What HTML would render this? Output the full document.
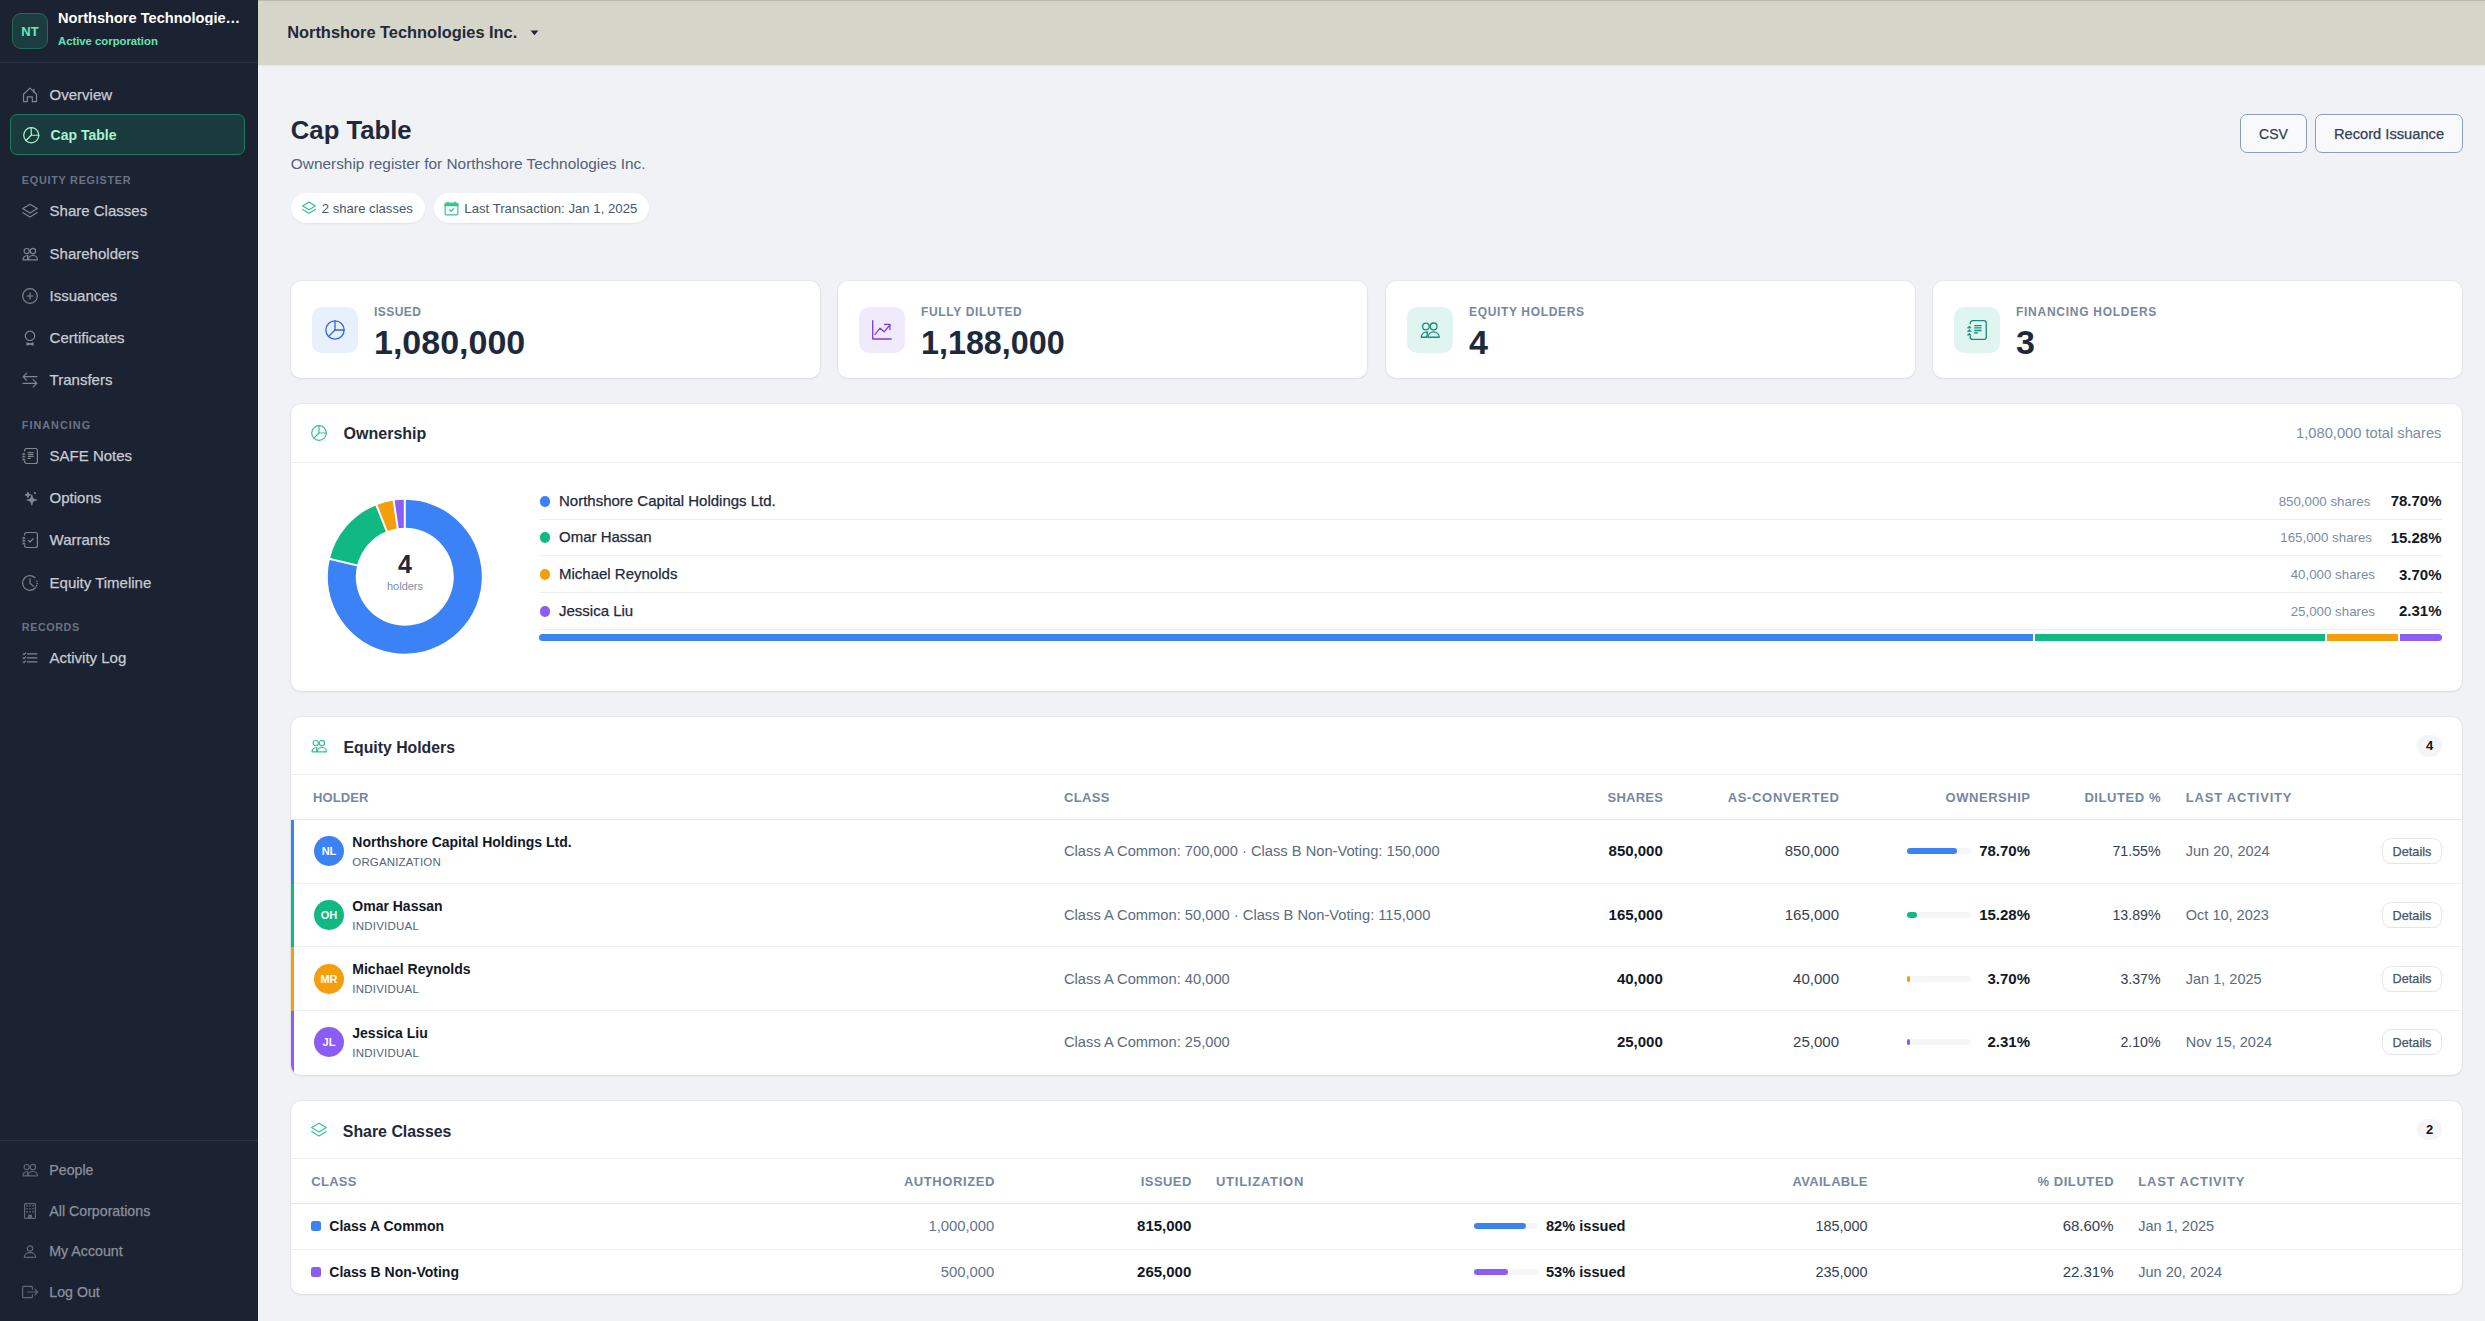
<!DOCTYPE html><html><head><meta charset="utf-8"><style>
html,body{margin:0;padding:0;}
body{width:2485px;height:1321px;overflow:hidden;position:relative;background:#f0f2f5;font-family:"Liberation Sans", sans-serif;}
.t{position:absolute;white-space:nowrap;}
.b{position:absolute;box-sizing:border-box;}
</style></head><body>
<div class="b" style="left:0px;top:0px;width:258px;height:1321px;background:#1b2232;"></div>
<div class="b" style="left:12px;top:13px;width:36px;height:36px;background:#1b3d3f;border:1px solid #1f6e5d;border-radius:9px;"></div>
<div class="t " style="top:25.00px;font-size:13px;line-height:13px;color:#6ee7b7;font-weight:700;left:12.00px;width:36px;text-align:center;">NT</div>
<div class="t " style="top:10.70px;font-size:14.6px;line-height:14.6px;color:#ffffff;font-weight:700;left:58px;width:186px;overflow:hidden;text-overflow:ellipsis;">Northshore Technologies Inc.</div>
<div class="t " style="top:36.35px;font-size:11.3px;line-height:11.3px;color:#66e4b0;font-weight:700;left:58px;">Active corporation</div>
<div class="b" style="left:0px;top:62px;width:258px;height:1px;background:#2a3344;"></div>
<svg class="b" style="left:21.80px;top:86.90px;color:#80878f;overflow:visible" width="16" height="16" viewBox="0 0 16 16" fill="none" stroke="#80878f" stroke-width="1.200" stroke-linecap="round" stroke-linejoin="round"><path d="M5.3 14.6H1.5V7.2L8 1.1l6.5 6.1v7.4h-4.2V9.9H5.3z"/><path d="M11.9 2.3v2.9"/></svg>
<div class="t " style="top:87.00px;font-size:15px;line-height:15px;color:#c8cbd2;left:49.6px;-webkit-text-stroke:0.25px currentColor;">Overview</div>
<div class="b" style="left:10px;top:114px;width:235px;height:41px;background:#1a3b3d;border:1px solid #1f7a60;border-radius:7px;"></div>
<svg class="b" style="left:22.75px;top:126.55px;color:#a7f3d0;overflow:visible" width="16.5" height="16.5" viewBox="0 0 16 16" fill="none" stroke="#a7f3d0" stroke-width="1.212" stroke-linecap="round" stroke-linejoin="round"><circle cx="8" cy="8" r="7.3"/><path d="M8 .7V8h7.3"/><path d="M8 8 2.9 13.1"/></svg>
<div class="t " style="top:128.00px;font-size:14px;line-height:14px;color:#a7f3d0;font-weight:700;left:50.6px;">Cap Table</div>
<div class="t " style="top:174.60px;font-size:10.8px;line-height:10.8px;color:#6b7383;font-weight:700;letter-spacing:0.759px;left:21.8px;">EQUITY REGISTER</div>
<svg class="b" style="left:22.00px;top:203.00px;color:#80878f;overflow:visible" width="16" height="16" viewBox="0 0 16 16" fill="none" stroke="#80878f" stroke-width="1.200" stroke-linecap="round" stroke-linejoin="round"><path d="M8 1.3.7 5.6 8 9.9l7.3-4.3z"/><path d="M.7 9.6 8 13.9l7.3-4.3"/></svg>
<div class="t " style="top:203.00px;font-size:15px;line-height:15px;color:#c8cbd2;left:49.6px;-webkit-text-stroke:0.25px currentColor;">Share Classes</div>
<svg class="b" style="left:22.00px;top:246.00px;color:#80878f;overflow:visible" width="16" height="16" viewBox="0 0 16 16" fill="none" stroke="#80878f" stroke-width="1.200" stroke-linecap="round" stroke-linejoin="round"><circle cx="4.7" cy="5.1" r="2.6"/><circle cx="10.9" cy="5.1" r="2.7"/><path d="M6.4 13.8c0-2.5 2-4.3 4.5-4.3s4.5 1.8 4.5 4.3z"/><path d="M5.9 9.5C3.1 9.6 1 11.3 1 13.8h4.5z"/></svg>
<div class="t " style="top:246.00px;font-size:15px;line-height:15px;color:#c8cbd2;left:49.6px;-webkit-text-stroke:0.25px currentColor;">Shareholders</div>
<svg class="b" style="left:22.00px;top:288.00px;color:#80878f;overflow:visible" width="16" height="16" viewBox="0 0 16 16" fill="none" stroke="#80878f" stroke-width="1.200" stroke-linecap="round" stroke-linejoin="round"><circle cx="8" cy="8" r="7.3"/><path d="M8 4.9v6.2M4.9 8h6.2"/></svg>
<div class="t " style="top:288.00px;font-size:15px;line-height:15px;color:#c8cbd2;left:49.6px;-webkit-text-stroke:0.25px currentColor;">Issuances</div>
<svg class="b" style="left:22.00px;top:330.00px;color:#80878f;overflow:visible" width="16" height="16" viewBox="0 0 16 16" fill="none" stroke="#80878f" stroke-width="1.200" stroke-linecap="round" stroke-linejoin="round"><circle cx="8" cy="5.8" r="4.7"/><path d="M4.4 12.2 8 13.3l3.6-1.1v3.6L8 14.7l-3.6 1.1z" fill="currentColor" stroke="none"/></svg>
<div class="t " style="top:330.00px;font-size:15px;line-height:15px;color:#c8cbd2;left:49.6px;-webkit-text-stroke:0.25px currentColor;">Certificates</div>
<svg class="b" style="left:22.00px;top:372.00px;color:#80878f;overflow:visible" width="16" height="16" viewBox="0 0 16 16" fill="none" stroke="#80878f" stroke-width="1.200" stroke-linecap="round" stroke-linejoin="round"><path d="M15 4.7H1.2M4.7 1.1 1.1 4.7l3.6 3.6"/><path d="M1 11.3h13.8m-3.6-3.6 3.6 3.6-3.6 3.6"/></svg>
<div class="t " style="top:372.00px;font-size:15px;line-height:15px;color:#c8cbd2;left:49.6px;-webkit-text-stroke:0.25px currentColor;">Transfers</div>
<div class="t " style="top:419.60px;font-size:10.8px;line-height:10.8px;color:#6b7383;font-weight:700;letter-spacing:1.034px;left:21.8px;">FINANCING</div>
<svg class="b" style="left:22.00px;top:448.00px;color:#80878f;overflow:visible" width="16" height="16" viewBox="0 0 16 16" fill="none" stroke="#80878f" stroke-width="1.200" stroke-linecap="round" stroke-linejoin="round"><path d="M2.6 3V2.5a2 2 0 0 1 2-2h8.8a2 2 0 0 1 2 2v11a2 2 0 0 1-2 2H4.6a2 2 0 0 1-2-2V13"/><path d="M.5 6.2 1.8 4.8l1.3 1.4zM.5 9 1.8 7.6 3.1 9zM.5 11.9l1.3-1.4 1.3 1.4z" fill="currentColor" stroke-width=".6"/><path d="M6.2 4.5h5M6.2 6.3h5M6.2 8.4h5M6.2 10.4h2"/></svg>
<div class="t " style="top:448.00px;font-size:15px;line-height:15px;color:#c8cbd2;left:49.6px;-webkit-text-stroke:0.25px currentColor;">SAFE Notes</div>
<svg class="b" style="left:22.00px;top:490.00px;color:#80878f;overflow:visible" width="16" height="16" viewBox="0 0 16 16" fill="none" stroke="#80878f" stroke-width="1.200" stroke-linecap="round" stroke-linejoin="round"><path d="M9.8 5.2Q10.1 9.7 14.6 10 10.1 10.3 9.8 14.8 9.5 10.3 5 10 9.5 9.7 9.8 5.2z" fill="currentColor"/><path d="M5.9 2.3Q6.1 4.6 8.4 4.8 6.1 5 5.9 7.3 5.7 5 3.4 4.8 5.7 4.6 5.9 2.3z" fill="currentColor"/><circle cx="12.9" cy="3" r="1.1" fill="currentColor" stroke="none"/></svg>
<div class="t " style="top:490.00px;font-size:15px;line-height:15px;color:#c8cbd2;left:49.6px;-webkit-text-stroke:0.25px currentColor;">Options</div>
<svg class="b" style="left:22.00px;top:532.00px;color:#80878f;overflow:visible" width="16" height="16" viewBox="0 0 16 16" fill="none" stroke="#80878f" stroke-width="1.200" stroke-linecap="round" stroke-linejoin="round"><path d="M2.6 3V2.5a2 2 0 0 1 2-2h8.8a2 2 0 0 1 2 2v11a2 2 0 0 1-2 2H4.6a2 2 0 0 1-2-2V13"/><path d="M.5 6.2 1.8 4.8l1.3 1.4zM.5 9 1.8 7.6 3.1 9zM.5 11.9l1.3-1.4 1.3 1.4z" fill="currentColor" stroke-width=".6"/><path d="M6.3 8.4l1.7 1.6 3.2-3.4"/></svg>
<div class="t " style="top:532.00px;font-size:15px;line-height:15px;color:#c8cbd2;left:49.6px;-webkit-text-stroke:0.25px currentColor;">Warrants</div>
<svg class="b" style="left:22.00px;top:574.70px;color:#80878f;overflow:visible" width="16" height="16" viewBox="0 0 16 16" fill="none" stroke="#80878f" stroke-width="1.200" stroke-linecap="round" stroke-linejoin="round"><path d="M12.9 2.7A7.3 7.3 0 1 0 13.2 13" /><path d="M14.9 6.3v.01M15.2 8.4v.01M14.6 10.6v.01M13.9 12.1v.01" stroke-width="1.5"/><path d="M8 3.8v4.3l3.1 2.9"/></svg>
<div class="t " style="top:575.00px;font-size:15px;line-height:15px;color:#c8cbd2;left:49.6px;-webkit-text-stroke:0.25px currentColor;">Equity Timeline</div>
<div class="t " style="top:621.60px;font-size:10.8px;line-height:10.8px;color:#6b7383;font-weight:700;letter-spacing:0.556px;left:21.8px;">RECORDS</div>
<svg class="b" style="left:22.00px;top:649.70px;color:#80878f;overflow:visible" width="16" height="16" viewBox="0 0 16 16" fill="none" stroke="#80878f" stroke-width="1.200" stroke-linecap="round" stroke-linejoin="round"><path d="M5.3 3.8h9.7M5.3 7.8h9.7M5.3 11.8h9.7"/><path d="M1.2 3.9l.8.7L3.6 2.9M1.2 7.9l.8.7 1.6-1.7M1.2 11.9l.8.7 1.6-1.7"/></svg>
<div class="t " style="top:650.00px;font-size:15px;line-height:15px;color:#c8cbd2;left:49.6px;-webkit-text-stroke:0.25px currentColor;">Activity Log</div>
<div class="b" style="left:0px;top:1140px;width:258px;height:1px;background:#2a3344;"></div>
<svg class="b" style="left:22.00px;top:1162.40px;color:#5f6675;overflow:visible" width="16" height="16" viewBox="0 0 16 16" fill="none" stroke="#5f6675" stroke-width="1.200" stroke-linecap="round" stroke-linejoin="round"><circle cx="4.7" cy="5.1" r="2.6"/><circle cx="10.9" cy="5.1" r="2.7"/><path d="M6.4 13.8c0-2.5 2-4.3 4.5-4.3s4.5 1.8 4.5 4.3z"/><path d="M5.9 9.5C3.1 9.6 1 11.3 1 13.8h4.5z"/></svg>
<div class="t " style="top:1162.90px;font-size:14.2px;line-height:14.2px;color:#8b919c;left:49.3px;-webkit-text-stroke:0.25px currentColor;">People</div>
<svg class="b" style="left:22.00px;top:1203.30px;color:#5f6675;overflow:visible" width="16" height="16" viewBox="0 0 16 16" fill="none" stroke="#5f6675" stroke-width="1.200" stroke-linecap="round" stroke-linejoin="round"><rect x="2.6" y=".6" width="10.8" height="14.8" rx=".8"/><path d="M4.2 2.1h1.5v1.5H4.2zM7.25 2.1h1.5v1.5h-1.5zM10.3 2.1h1.5v1.5h-1.5zM4.2 5h1.5v1.5H4.2zM7.25 5h1.5v1.5h-1.5zM10.3 5h1.5v1.5h-1.5zM4.2 7.9h1.5v1.5H4.2zM7.25 7.9h1.5v1.5h-1.5zM10.3 7.9h1.5v1.5h-1.5zM6 11.8h4v3.6H6z" fill="currentColor" stroke="none"/></svg>
<div class="t " style="top:1203.90px;font-size:14.2px;line-height:14.2px;color:#8b919c;left:49.3px;-webkit-text-stroke:0.25px currentColor;">All Corporations</div>
<svg class="b" style="left:22.00px;top:1243.40px;color:#5f6675;overflow:visible" width="16" height="16" viewBox="0 0 16 16" fill="none" stroke="#5f6675" stroke-width="1.200" stroke-linecap="round" stroke-linejoin="round"><circle cx="8" cy="5.6" r="2.7"/><path d="M2.3 14.3c0-2.7 2.6-4.6 5.7-4.6s5.7 1.9 5.7 4.6z"/></svg>
<div class="t " style="top:1243.90px;font-size:14.2px;line-height:14.2px;color:#8b919c;left:49.3px;-webkit-text-stroke:0.25px currentColor;">My Account</div>
<svg class="b" style="left:22.00px;top:1284.00px;color:#5f6675;overflow:visible" width="16" height="16" viewBox="0 0 16 16" fill="none" stroke="#5f6675" stroke-width="1.200" stroke-linecap="round" stroke-linejoin="round"><path d="M10.4 5.3V3.4a1 1 0 0 0-1-1H1.6a1 1 0 0 0-1 1v9.3a1 1 0 0 0 1 1h7.8a1 1 0 0 0 1-1v-1.9"/><path d="M5.6 8h10m-2.8-2.9L15.6 8l-2.8 2.9"/></svg>
<div class="t " style="top:1284.90px;font-size:14.2px;line-height:14.2px;color:#8b919c;left:49.3px;-webkit-text-stroke:0.25px currentColor;">Log Out</div>
<div class="b" style="left:258px;top:0px;width:2227px;height:65px;background:#d6d5c9;border-top:1px solid #b9b8ab;box-shadow:0 1px 2px rgba(15,23,42,.06);"></div>
<div class="t " style="top:23.80px;font-size:16.4px;line-height:16.4px;color:#1e293b;font-weight:700;left:287.2px;">Northshore Technologies Inc.</div>
<svg class="b" style="left:530px;top:29.5px" width="9" height="6" viewBox="0 0 9 6"><path d="M.6.6h7.8L4.5 5.2z" fill="#1e293b"/></svg>
<div class="t " style="top:118.15px;font-size:25.7px;line-height:25.7px;color:#1e293b;font-weight:700;left:290.8px;">Cap Table</div>
<div class="t " style="top:155.80px;font-size:15.4px;line-height:15.4px;color:#526179;left:290.8px;">Ownership register for Northshore Technologies Inc.</div>
<div class="b" style="left:291px;top:193px;width:134px;height:30px;background:#fff;border-radius:15px;box-shadow:0 1px 2px rgba(15,23,42,.06);"></div>
<svg class="b" style="left:301.90px;top:201.10px;color:#34c38f;overflow:visible" width="14" height="14" viewBox="0 0 16 16" fill="none" stroke="#34c38f" stroke-width="1.371" stroke-linecap="round" stroke-linejoin="round"><path d="M8 1.3.7 5.6 8 9.9l7.3-4.3z"/><path d="M.7 9.6 8 13.9l7.3-4.3"/></svg>
<div class="t " style="top:201.95px;font-size:13.1px;line-height:13.1px;color:#475569;left:321.8px;">2 share classes</div>
<div class="b" style="left:434px;top:193px;width:215px;height:30px;background:#fff;border-radius:15px;box-shadow:0 1px 2px rgba(15,23,42,.06);"></div>
<svg class="b" style="left:444.00px;top:200.70px;color:#34c38f;overflow:visible" width="15" height="15" viewBox="0 0 16 16" fill="none" stroke="#34c38f" stroke-width="1.280" stroke-linecap="round" stroke-linejoin="round"><rect x="1.2" y="2.2" width="13.6" height="12.6" rx="1.3"/><path d="M1.2 3.2h13.6v1.8H1.2z" fill="currentColor"/><path d="M4.2 1v2M11.8 1v2"/><path d="M6 9.4l1.6 1.5 2.6-2.8"/></svg>
<div class="t " style="top:201.90px;font-size:13.2px;line-height:13.2px;color:#475569;left:464.3px;">Last Transaction: Jan 1, 2025</div>
<div class="b" style="left:2240px;top:114px;width:67px;height:39px;background:#f8f9fb;border:1px solid #8c9db5;border-radius:7px;"></div>
<div class="t " style="top:127.00px;font-size:14px;line-height:14px;color:#334155;left:2240.00px;width:67px;text-align:center;-webkit-text-stroke:0.25px currentColor;">CSV</div>
<div class="b" style="left:2315px;top:114px;width:148px;height:39px;background:#f8f9fb;border:1px solid #8c9db5;border-radius:7px;"></div>
<div class="t " style="top:126.65px;font-size:14.7px;line-height:14.7px;color:#334155;left:2315.00px;width:148px;text-align:center;-webkit-text-stroke:0.25px currentColor;">Record Issuance</div>
<div class="b" style="left:291px;top:281px;width:529px;height:97px;background:#fff;border-radius:10px;box-shadow:0 0 0 1px rgba(15,23,42,.035),0 1px 3px rgba(15,23,42,.06);"></div>
<div class="b" style="left:312px;top:307px;width:46px;height:46px;background:#e8effd;border-radius:10px;"></div>
<svg class="b" style="left:325.00px;top:320.00px;color:#2f66e8;overflow:visible" width="20" height="20" viewBox="0 0 16 16" fill="none" stroke="#2f66e8" stroke-width="1.040" stroke-linecap="round" stroke-linejoin="round"><circle cx="8" cy="8" r="7.3"/><path d="M8 .7V8h7.3"/><path d="M8 8 2.9 13.1"/></svg>
<div class="t " style="top:306.00px;font-size:12px;line-height:12px;color:#7588a1;font-weight:700;letter-spacing:0.437px;left:374px;">ISSUED</div>
<div class="t " style="top:325.00px;font-size:34px;line-height:34px;color:#1e293b;font-weight:700;left:374px;">1,080,000</div>
<div class="b" style="left:838px;top:281px;width:529px;height:97px;background:#fff;border-radius:10px;box-shadow:0 0 0 1px rgba(15,23,42,.035),0 1px 3px rgba(15,23,42,.06);"></div>
<div class="b" style="left:859px;top:307px;width:46px;height:46px;background:#f0eafd;border-radius:10px;"></div>
<svg class="b" style="left:872.00px;top:320.00px;color:#7c3aed;overflow:visible" width="20" height="20" viewBox="0 0 20 20" fill="none" stroke="#7c3aed" stroke-width="1.300" stroke-linecap="round" stroke-linejoin="round"><path d="M.7.7V19h18.6"/><path d="M3 14.4l5.1-6.2 4 3.6 5.7-6.8"/><path d="M12.5 4.4h5.4v5.2"/></svg>
<div class="t " style="top:306.00px;font-size:12px;line-height:12px;color:#7588a1;font-weight:700;letter-spacing:0.672px;left:921px;">FULLY DILUTED</div>
<div class="t " style="top:326.85px;font-size:32.3px;line-height:32.3px;color:#1e293b;font-weight:700;left:921px;">1,188,000</div>
<div class="b" style="left:1386px;top:281px;width:529px;height:97px;background:#fff;border-radius:10px;box-shadow:0 0 0 1px rgba(15,23,42,.035),0 1px 3px rgba(15,23,42,.06);"></div>
<div class="b" style="left:1407px;top:307px;width:46px;height:46px;background:#e0f4f0;border-radius:10px;"></div>
<svg class="b" style="left:1420.00px;top:320.00px;color:#0f8f7e;overflow:visible" width="20" height="20" viewBox="0 0 16 16" fill="none" stroke="#0f8f7e" stroke-width="1.040" stroke-linecap="round" stroke-linejoin="round"><circle cx="4.7" cy="5.1" r="2.6"/><circle cx="10.9" cy="5.1" r="2.7"/><path d="M6.4 13.8c0-2.5 2-4.3 4.5-4.3s4.5 1.8 4.5 4.3z"/><path d="M5.9 9.5C3.1 9.6 1 11.3 1 13.8h4.5z"/></svg>
<div class="t " style="top:306.00px;font-size:12px;line-height:12px;color:#7588a1;font-weight:700;letter-spacing:0.653px;left:1469px;">EQUITY HOLDERS</div>
<div class="t " style="top:325.00px;font-size:34px;line-height:34px;color:#1e293b;font-weight:700;left:1469px;">4</div>
<div class="b" style="left:1933px;top:281px;width:529px;height:97px;background:#fff;border-radius:10px;box-shadow:0 0 0 1px rgba(15,23,42,.035),0 1px 3px rgba(15,23,42,.06);"></div>
<div class="b" style="left:1954px;top:307px;width:46px;height:46px;background:#e0f4f0;border-radius:10px;"></div>
<svg class="b" style="left:1967.00px;top:320.00px;color:#0f8f7e;overflow:visible" width="20" height="20" viewBox="0 0 16 16" fill="none" stroke="#0f8f7e" stroke-width="1.040" stroke-linecap="round" stroke-linejoin="round"><path d="M2.6 3V2.5a2 2 0 0 1 2-2h8.8a2 2 0 0 1 2 2v11a2 2 0 0 1-2 2H4.6a2 2 0 0 1-2-2V13"/><path d="M.5 6.2 1.8 4.8l1.3 1.4zM.5 9 1.8 7.6 3.1 9zM.5 11.9l1.3-1.4 1.3 1.4z" fill="currentColor" stroke-width=".6"/><path d="M6.2 4.5h5M6.2 6.3h5M6.2 8.4h5M6.2 10.4h2"/></svg>
<div class="t " style="top:306.00px;font-size:12px;line-height:12px;color:#7588a1;font-weight:700;letter-spacing:0.726px;left:2016px;">FINANCING HOLDERS</div>
<div class="t " style="top:325.00px;font-size:34px;line-height:34px;color:#1e293b;font-weight:700;left:2016px;">3</div>
<div class="b" style="left:291px;top:404px;width:2171px;height:287px;background:#fff;border-radius:10px;box-shadow:0 0 0 1px rgba(15,23,42,.035),0 1px 3px rgba(15,23,42,.06);"></div>
<svg class="b" style="left:311.00px;top:424.80px;color:#34c38f;overflow:visible" width="16" height="16" viewBox="0 0 16 16" fill="none" stroke="#34c38f" stroke-width="1.200" stroke-linecap="round" stroke-linejoin="round"><circle cx="8" cy="8" r="7.3"/><path d="M8 .7V8h7.3"/><path d="M8 8 2.9 13.1"/></svg>
<div class="t " style="top:425.50px;font-size:16px;line-height:16px;color:#1e293b;font-weight:700;left:343.6px;">Ownership</div>
<div class="t " style="top:425.65px;font-size:14.7px;line-height:14.7px;color:#7a8ca5;right:43.60px;">1,080,000 total shares</div>
<div class="b" style="left:291px;top:462px;width:2171px;height:1px;background:#eceef2;"></div>
<svg class="b" style="left:0;top:0" width="2485" height="1321" viewBox="0 0 2485 1321"><path d="M404.80 499.70 A77 77 0 1 1 329.88 558.92 L357.12 565.39 A49 49 0 1 0 404.80 527.70Z" fill="#3b82f6"/><path d="M329.88 558.92 A77 77 0 0 1 376.41 505.13 L386.73 531.15 A49 49 0 0 0 357.12 565.39Z" fill="#10b981"/><path d="M376.41 505.13 A77 77 0 0 1 393.66 500.51 L397.71 528.22 A49 49 0 0 0 386.73 531.15Z" fill="#f59e0b"/><path d="M393.66 500.51 A77 77 0 0 1 404.80 499.70 L404.80 527.70 A49 49 0 0 0 397.71 528.22Z" fill="#8b5cf6"/><line x1="404.80" y1="529.70" x2="404.80" y2="497.70" stroke="#fff" stroke-width="2"/><line x1="359.07" y1="565.85" x2="327.93" y2="558.46" stroke="#fff" stroke-width="2"/><line x1="387.47" y1="533.01" x2="375.67" y2="503.27" stroke="#fff" stroke-width="2"/><line x1="398.00" y1="530.19" x2="393.37" y2="498.53" stroke="#fff" stroke-width="2"/></svg>
<div class="t " style="top:551.50px;font-size:25px;line-height:25px;color:#1e293b;font-weight:700;left:385.00px;width:40px;text-align:center;">4</div>
<div class="t " style="top:580.50px;font-size:11px;line-height:11px;color:#7a8ca5;left:375.00px;width:60px;text-align:center;">holders</div>
<div class="b" style="left:539.5px;top:496px;width:10.5px;height:10.5px;background:#3b82f6;border-radius:50%;"></div>
<div class="t " style="top:493.00px;font-size:15px;line-height:15px;color:#1e293b;left:559px;-webkit-text-stroke:0.25px currentColor;">Northshore Capital Holdings Ltd.</div>
<div class="t " style="top:494.85px;font-size:13.3px;line-height:13.3px;color:#7a8ca5;right:114.70px;">850,000 shares</div>
<div class="t " style="top:493.00px;font-size:15px;line-height:15px;color:#111827;font-weight:700;right:43.50px;">78.70%</div>
<div class="b" style="left:539.5px;top:532.3px;width:10.5px;height:10.5px;background:#10b981;border-radius:50%;"></div>
<div class="t " style="top:529.00px;font-size:15px;line-height:15px;color:#1e293b;left:559px;-webkit-text-stroke:0.25px currentColor;">Omar Hassan</div>
<div class="t " style="top:530.85px;font-size:13.3px;line-height:13.3px;color:#7a8ca5;right:113.00px;">165,000 shares</div>
<div class="t " style="top:530.00px;font-size:15px;line-height:15px;color:#111827;font-weight:700;right:43.50px;">15.28%</div>
<div class="b" style="left:539.5px;top:569.2px;width:10.5px;height:10.5px;background:#f59e0b;border-radius:50%;"></div>
<div class="t " style="top:566.00px;font-size:15px;line-height:15px;color:#1e293b;left:559px;-webkit-text-stroke:0.25px currentColor;">Michael Reynolds</div>
<div class="t " style="top:567.85px;font-size:13.3px;line-height:13.3px;color:#7a8ca5;right:110.00px;">40,000 shares</div>
<div class="t " style="top:567.00px;font-size:15px;line-height:15px;color:#111827;font-weight:700;right:43.50px;">3.70%</div>
<div class="b" style="left:539.5px;top:606px;width:10.5px;height:10.5px;background:#8b5cf6;border-radius:50%;"></div>
<div class="t " style="top:603.00px;font-size:15px;line-height:15px;color:#1e293b;left:559px;-webkit-text-stroke:0.25px currentColor;">Jessica Liu</div>
<div class="t " style="top:604.85px;font-size:13.3px;line-height:13.3px;color:#7a8ca5;right:110.00px;">25,000 shares</div>
<div class="t " style="top:603.00px;font-size:15px;line-height:15px;color:#111827;font-weight:700;right:43.50px;">2.31%</div>
<div class="b" style="left:539px;top:519px;width:1903px;height:1px;background:#eceef2;"></div>
<div class="b" style="left:539px;top:555px;width:1903px;height:1px;background:#eceef2;"></div>
<div class="b" style="left:539px;top:592px;width:1903px;height:1px;background:#eceef2;"></div>
<div class="b" style="left:539px;top:629px;width:1903px;height:1px;background:#eceef2;"></div>
<div class="b" style="left:539px;top:634px;width:1903px;height:7px;border-radius:4px;overflow:hidden;"><div class="b" style="left:0;top:0;width:1494px;height:7px;background:#3b82f6"></div><div class="b" style="left:1496px;top:0;width:290px;height:7px;background:#10b981"></div><div class="b" style="left:1788px;top:0;width:71px;height:7px;background:#f59e0b"></div><div class="b" style="left:1861px;top:0;width:42px;height:7px;background:#8b5cf6"></div></div>
<div class="b" style="left:291px;top:717px;width:2171px;height:358px;background:#fff;border-radius:10px;box-shadow:0 0 0 1px rgba(15,23,42,.035),0 1px 3px rgba(15,23,42,.06);overflow:hidden;"></div>
<svg class="b" style="left:311.00px;top:738.00px;color:#34c38f;overflow:visible" width="16" height="16" viewBox="0 0 16 16" fill="none" stroke="#34c38f" stroke-width="1.200" stroke-linecap="round" stroke-linejoin="round"><circle cx="4.7" cy="5.1" r="2.6"/><circle cx="10.9" cy="5.1" r="2.7"/><path d="M6.4 13.8c0-2.5 2-4.3 4.5-4.3s4.5 1.8 4.5 4.3z"/><path d="M5.9 9.5C3.1 9.6 1 11.3 1 13.8h4.5z"/></svg>
<div class="t " style="top:739.60px;font-size:15.8px;line-height:15.8px;color:#1e293b;font-weight:700;left:343.5px;">Equity Holders</div>
<div class="b" style="left:2417px;top:734.5px;width:25px;height:22px;background:#f4f5f7;border-radius:11px;"></div>
<div class="t " style="top:739.00px;font-size:13px;line-height:13px;color:#111;font-weight:700;left:2417.00px;width:25px;text-align:center;">4</div>
<div class="b" style="left:291px;top:774px;width:2171px;height:1px;background:#eceef2;"></div>
<div class="t " style="top:791.00px;font-size:13px;line-height:13px;color:#7588a1;font-weight:700;letter-spacing:0.119px;left:312.9px;">HOLDER</div>
<div class="t " style="top:791.00px;font-size:13px;line-height:13px;color:#7588a1;font-weight:700;letter-spacing:0.348px;left:1064px;">CLASS</div>
<div class="t " style="top:791.00px;font-size:13px;line-height:13px;color:#7588a1;font-weight:700;letter-spacing:0.22px;right:821.98px;">SHARES</div>
<div class="t " style="top:791.00px;font-size:13px;line-height:13px;color:#7588a1;font-weight:700;letter-spacing:0.666px;right:645.33px;">AS-CONVERTED</div>
<div class="t " style="top:791.00px;font-size:13px;line-height:13px;color:#7588a1;font-weight:700;letter-spacing:0.536px;right:454.46px;">OWNERSHIP</div>
<div class="t " style="top:791.00px;font-size:13px;line-height:13px;color:#7588a1;font-weight:700;letter-spacing:0.589px;right:323.81px;">DILUTED %</div>
<div class="t " style="top:791.00px;font-size:13px;line-height:13px;color:#7588a1;font-weight:700;letter-spacing:0.785px;left:2185.8px;">LAST ACTIVITY</div>
<div class="b" style="left:291px;top:819px;width:2171px;height:1px;background:#e6e8ec;"></div>
<div class="b" style="left:291px;top:717px;width:2171px;height:358px;border-radius:10px;overflow:hidden"><div class="b" style="left:0;top:103px;width:3px;height:64px;background:#3b82f6"></div><div class="b" style="left:0;top:167px;width:3px;height:63px;background:#10b981"></div><div class="b" style="left:0;top:230px;width:3px;height:64px;background:#f59e0b"></div><div class="b" style="left:0;top:294px;width:3px;height:64px;background:#8b5cf6"></div></div>
<div class="b" style="left:294px;top:883px;width:2168px;height:1px;background:#eef0f3;"></div>
<div class="b" style="left:314px;top:836px;width:30px;height:30px;background:#3b82f6;border-radius:50%;"></div>
<div class="t " style="top:845.50px;font-size:11px;line-height:11px;color:#fff;font-weight:700;left:314.00px;width:30px;text-align:center;">NL</div>
<div class="t " style="top:835.00px;font-size:14px;line-height:14px;color:#111827;font-weight:700;left:352.3px;">Northshore Capital Holdings Ltd.</div>
<div class="t " style="top:857.25px;font-size:11.5px;line-height:11.5px;color:#53647c;letter-spacing:0.16px;left:352.3px;">ORGANIZATION</div>
<div class="t " style="top:843.65px;font-size:14.7px;line-height:14.7px;color:#5b6b80;left:1064px;">Class A Common: 700,000 · Class B Non-Voting: 150,000</div>
<div class="t " style="top:843.00px;font-size:15px;line-height:15px;color:#111827;font-weight:700;right:822.20px;">850,000</div>
<div class="t " style="top:843.00px;font-size:15px;line-height:15px;color:#334155;right:646.00px;">850,000</div>
<div class="b" style="left:1907px;top:848px;width:64px;height:6px;background:#f5f6f8;border-radius:3px;"></div>
<div class="b" style="left:1907px;top:848px;width:50.368px;height:6px;background:#3b82f6;border-radius:3px;"></div>
<div class="t " style="top:843.00px;font-size:15px;line-height:15px;color:#111827;font-weight:700;right:455.00px;">78.70%</div>
<div class="t " style="top:843.90px;font-size:14.2px;line-height:14.2px;color:#334155;right:324.40px;">71.55%</div>
<div class="t " style="top:843.75px;font-size:14.5px;line-height:14.5px;color:#5b6b80;left:2185.8px;">Jun 20, 2024</div>
<div class="b" style="left:2382px;top:838px;width:60px;height:26px;background:#fff;border:1px solid #e2e5ea;border-radius:9px;"></div>
<div class="t " style="top:845.65px;font-size:12.7px;line-height:12.7px;color:#475569;left:2382.00px;width:60px;text-align:center;-webkit-text-stroke:0.25px currentColor;">Details</div>
<div class="b" style="left:294px;top:946px;width:2168px;height:1px;background:#eef0f3;"></div>
<div class="b" style="left:314px;top:900px;width:30px;height:30px;background:#10b981;border-radius:50%;"></div>
<div class="t " style="top:909.50px;font-size:11px;line-height:11px;color:#fff;font-weight:700;left:314.00px;width:30px;text-align:center;">OH</div>
<div class="t " style="top:899.00px;font-size:14px;line-height:14px;color:#111827;font-weight:700;left:352.3px;">Omar Hassan</div>
<div class="t " style="top:921.25px;font-size:11.5px;line-height:11.5px;color:#53647c;letter-spacing:0.216px;left:352.3px;">INDIVIDUAL</div>
<div class="t " style="top:907.65px;font-size:14.7px;line-height:14.7px;color:#5b6b80;left:1064px;">Class A Common: 50,000 · Class B Non-Voting: 115,000</div>
<div class="t " style="top:907.00px;font-size:15px;line-height:15px;color:#111827;font-weight:700;right:822.20px;">165,000</div>
<div class="t " style="top:907.00px;font-size:15px;line-height:15px;color:#334155;right:646.00px;">165,000</div>
<div class="b" style="left:1907px;top:912px;width:64px;height:6px;background:#f5f6f8;border-radius:3px;"></div>
<div class="b" style="left:1907px;top:912px;width:9.7792px;height:6px;background:#10b981;border-radius:3px;"></div>
<div class="t " style="top:907.00px;font-size:15px;line-height:15px;color:#111827;font-weight:700;right:455.00px;">15.28%</div>
<div class="t " style="top:907.90px;font-size:14.2px;line-height:14.2px;color:#334155;right:324.40px;">13.89%</div>
<div class="t " style="top:907.75px;font-size:14.5px;line-height:14.5px;color:#5b6b80;left:2185.8px;">Oct 10, 2023</div>
<div class="b" style="left:2382px;top:902px;width:60px;height:26px;background:#fff;border:1px solid #e2e5ea;border-radius:9px;"></div>
<div class="t " style="top:909.65px;font-size:12.7px;line-height:12.7px;color:#475569;left:2382.00px;width:60px;text-align:center;-webkit-text-stroke:0.25px currentColor;">Details</div>
<div class="b" style="left:294px;top:1010px;width:2168px;height:1px;background:#eef0f3;"></div>
<div class="b" style="left:314px;top:963.5px;width:30px;height:30px;background:#f59e0b;border-radius:50%;"></div>
<div class="t " style="top:973.50px;font-size:11px;line-height:11px;color:#fff;font-weight:700;left:314.00px;width:30px;text-align:center;">MR</div>
<div class="t " style="top:962.00px;font-size:14px;line-height:14px;color:#111827;font-weight:700;left:352.3px;">Michael Reynolds</div>
<div class="t " style="top:984.25px;font-size:11.5px;line-height:11.5px;color:#53647c;letter-spacing:0.216px;left:352.3px;">INDIVIDUAL</div>
<div class="t " style="top:971.65px;font-size:14.7px;line-height:14.7px;color:#5b6b80;left:1064px;">Class A Common: 40,000</div>
<div class="t " style="top:971.00px;font-size:15px;line-height:15px;color:#111827;font-weight:700;right:822.20px;">40,000</div>
<div class="t " style="top:971.00px;font-size:15px;line-height:15px;color:#334155;right:646.00px;">40,000</div>
<div class="b" style="left:1907px;top:975.5px;width:64px;height:6px;background:#f5f6f8;border-radius:3px;"></div>
<div class="b" style="left:1907px;top:975.5px;width:2.5px;height:6px;background:#f59e0b;border-radius:3px;"></div>
<div class="t " style="top:971.00px;font-size:15px;line-height:15px;color:#111827;font-weight:700;right:455.00px;">3.70%</div>
<div class="t " style="top:971.90px;font-size:14.2px;line-height:14.2px;color:#334155;right:324.40px;">3.37%</div>
<div class="t " style="top:971.75px;font-size:14.5px;line-height:14.5px;color:#5b6b80;left:2185.8px;">Jan 1, 2025</div>
<div class="b" style="left:2382px;top:965.5px;width:60px;height:26px;background:#fff;border:1px solid #e2e5ea;border-radius:9px;"></div>
<div class="t " style="top:972.65px;font-size:12.7px;line-height:12.7px;color:#475569;left:2382.00px;width:60px;text-align:center;-webkit-text-stroke:0.25px currentColor;">Details</div>
<div class="b" style="left:314px;top:1027px;width:30px;height:30px;background:#8b5cf6;border-radius:50%;"></div>
<div class="t " style="top:1036.50px;font-size:11px;line-height:11px;color:#fff;font-weight:700;left:314.00px;width:30px;text-align:center;">JL</div>
<div class="t " style="top:1026.00px;font-size:14px;line-height:14px;color:#111827;font-weight:700;left:352.3px;">Jessica Liu</div>
<div class="t " style="top:1048.25px;font-size:11.5px;line-height:11.5px;color:#53647c;letter-spacing:0.216px;left:352.3px;">INDIVIDUAL</div>
<div class="t " style="top:1034.65px;font-size:14.7px;line-height:14.7px;color:#5b6b80;left:1064px;">Class A Common: 25,000</div>
<div class="t " style="top:1034.00px;font-size:15px;line-height:15px;color:#111827;font-weight:700;right:822.20px;">25,000</div>
<div class="t " style="top:1034.00px;font-size:15px;line-height:15px;color:#334155;right:646.00px;">25,000</div>
<div class="b" style="left:1907px;top:1039px;width:64px;height:6px;background:#f5f6f8;border-radius:3px;"></div>
<div class="b" style="left:1907px;top:1039px;width:2.5px;height:6px;background:#8b5cf6;border-radius:3px;"></div>
<div class="t " style="top:1034.00px;font-size:15px;line-height:15px;color:#111827;font-weight:700;right:455.00px;">2.31%</div>
<div class="t " style="top:1034.90px;font-size:14.2px;line-height:14.2px;color:#334155;right:324.40px;">2.10%</div>
<div class="t " style="top:1034.75px;font-size:14.5px;line-height:14.5px;color:#5b6b80;left:2185.8px;">Nov 15, 2024</div>
<div class="b" style="left:2382px;top:1029px;width:60px;height:26px;background:#fff;border:1px solid #e2e5ea;border-radius:9px;"></div>
<div class="t " style="top:1036.65px;font-size:12.7px;line-height:12.7px;color:#475569;left:2382.00px;width:60px;text-align:center;-webkit-text-stroke:0.25px currentColor;">Details</div>
<div class="b" style="left:291px;top:1101px;width:2171px;height:193px;background:#fff;border-radius:10px;box-shadow:0 0 0 1px rgba(15,23,42,.035),0 1px 3px rgba(15,23,42,.06);"></div>
<svg class="b" style="left:311.00px;top:1122.00px;color:#34c38f;overflow:visible" width="16" height="16" viewBox="0 0 16 16" fill="none" stroke="#34c38f" stroke-width="1.200" stroke-linecap="round" stroke-linejoin="round"><path d="M8 1.3.7 5.6 8 9.9l7.3-4.3z"/><path d="M.7 9.6 8 13.9l7.3-4.3"/></svg>
<div class="t " style="top:1123.55px;font-size:15.9px;line-height:15.9px;color:#1e293b;font-weight:700;left:342.8px;">Share Classes</div>
<div class="b" style="left:2417px;top:1119px;width:25px;height:21px;background:#f4f5f7;border-radius:11px;"></div>
<div class="t " style="top:1123.00px;font-size:13px;line-height:13px;color:#111;font-weight:700;left:2417.00px;width:25px;text-align:center;">2</div>
<div class="b" style="left:291px;top:1158px;width:2171px;height:1px;background:#eceef2;"></div>
<div class="t " style="top:1175.00px;font-size:13px;line-height:13px;color:#7588a1;font-weight:700;letter-spacing:0.308px;left:311.2px;">CLASS</div>
<div class="t " style="top:1175.00px;font-size:13px;line-height:13px;color:#7588a1;font-weight:700;letter-spacing:0.578px;right:1490.12px;">AUTHORIZED</div>
<div class="t " style="top:1175.00px;font-size:13px;line-height:13px;color:#7588a1;font-weight:700;letter-spacing:0.433px;right:1293.27px;">ISSUED</div>
<div class="t " style="top:1175.00px;font-size:13px;line-height:13px;color:#7588a1;font-weight:700;letter-spacing:0.736px;left:1216px;">UTILIZATION</div>
<div class="t " style="top:1175.00px;font-size:13px;line-height:13px;color:#7588a1;font-weight:700;letter-spacing:0.327px;right:617.17px;">AVAILABLE</div>
<div class="t " style="top:1175.00px;font-size:13px;line-height:13px;color:#7588a1;font-weight:700;letter-spacing:0.578px;right:370.92px;">% DILUTED</div>
<div class="t " style="top:1175.00px;font-size:13px;line-height:13px;color:#7588a1;font-weight:700;letter-spacing:0.824px;left:2138.3px;">LAST ACTIVITY</div>
<div class="b" style="left:291px;top:1203px;width:2171px;height:1px;background:#e6e8ec;"></div>
<div class="b" style="left:291px;top:1249px;width:2171px;height:1px;background:#eef0f3;"></div>
<div class="b" style="left:311.2px;top:1220.8px;width:10px;height:10px;background:#3b82f6;border-radius:2.5px;"></div>
<div class="t " style="top:1219.00px;font-size:14px;line-height:14px;color:#111827;font-weight:700;left:329.3px;">Class A Common</div>
<div class="t " style="top:1218.60px;font-size:14.8px;line-height:14.8px;color:#64748b;right:1490.70px;">1,000,000</div>
<div class="t " style="top:1218.00px;font-size:15px;line-height:15px;color:#111827;font-weight:700;right:1293.70px;">815,000</div>
<div class="b" style="left:1474px;top:1222.8px;width:64px;height:6px;background:#f5f6f8;border-radius:3px;"></div>
<div class="b" style="left:1474px;top:1222.8px;width:52.16px;height:6px;background:#3b82f6;border-radius:3px;"></div>
<div class="t " style="top:1218.70px;font-size:14.6px;line-height:14.6px;color:#111827;font-weight:700;left:1546px;">82% issued</div>
<div class="t " style="top:1218.80px;font-size:14.4px;line-height:14.4px;color:#334155;right:617.50px;">185,000</div>
<div class="t " style="top:1218.00px;font-size:15px;line-height:15px;color:#334155;right:371.50px;">68.60%</div>
<div class="t " style="top:1218.75px;font-size:14.5px;line-height:14.5px;color:#5b6b80;left:2138.3px;">Jan 1, 2025</div>
<div class="b" style="left:311.2px;top:1266.9px;width:10px;height:10px;background:#8b5cf6;border-radius:2.5px;"></div>
<div class="t " style="top:1265.00px;font-size:14px;line-height:14px;color:#111827;font-weight:700;left:329.3px;">Class B Non-Voting</div>
<div class="t " style="top:1264.60px;font-size:14.8px;line-height:14.8px;color:#64748b;right:1490.70px;">500,000</div>
<div class="t " style="top:1264.00px;font-size:15px;line-height:15px;color:#111827;font-weight:700;right:1293.70px;">265,000</div>
<div class="b" style="left:1474px;top:1268.9px;width:64px;height:6px;background:#f5f6f8;border-radius:3px;"></div>
<div class="b" style="left:1474px;top:1268.9px;width:33.92px;height:6px;background:#8b5cf6;border-radius:3px;"></div>
<div class="t " style="top:1264.70px;font-size:14.6px;line-height:14.6px;color:#111827;font-weight:700;left:1546px;">53% issued</div>
<div class="t " style="top:1264.80px;font-size:14.4px;line-height:14.4px;color:#334155;right:617.50px;">235,000</div>
<div class="t " style="top:1264.00px;font-size:15px;line-height:15px;color:#334155;right:371.50px;">22.31%</div>
<div class="t " style="top:1264.75px;font-size:14.5px;line-height:14.5px;color:#5b6b80;left:2138.3px;">Jun 20, 2024</div>
</body></html>
